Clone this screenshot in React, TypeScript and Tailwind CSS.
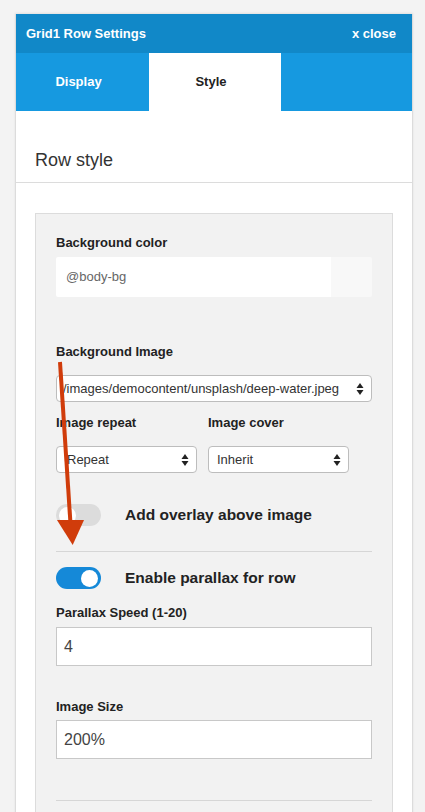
import React from "react";

const font = { fontFamily: '"Liberation Sans", Arial, Helvetica, sans-serif' };

function SelectArrows() {
  return (
    <svg width="8" height="14" viewBox="0 0 8 14" className="shrink-0">
      <path d="M4 1 L7.5 6 L0.5 6 Z" fill="#222" />
      <path d="M4 13 L7.5 8 L0.5 8 Z" fill="#222" />
    </svg>
  );
}

function FakeSelect({ value, className, textClass }: { value: string; className: string; textClass: string }) {
  return (
    <div
      className={`h-[27px] flex items-center justify-between bg-white border border-[#bdbdbd] rounded-[4px] pr-[7px] overflow-hidden ${className}`}
    >
      <span className={`text-[13px] text-[#333] whitespace-nowrap ${textClass}`}>{value}</span>
      <SelectArrows />
    </div>
  );
}

function Toggle({ on }: { on: boolean }) {
  return (
    <div
      className={`w-[45px] h-[22px] rounded-full flex items-center px-[3px] shrink-0 ${
        on ? "bg-[#1589d8] justify-end" : "bg-[#dcdcdc] justify-start"
      }`}
    >
      <div className="w-[17px] h-[17px] rounded-full bg-white" />
    </div>
  );
}

export default function App() {
  return (
    <div className="relative min-h-[900px] bg-[#f3f3f3] pt-[14px]" style={font}>
      <div className="ml-[15px] w-[398px] bg-white border-x border-[#dcdcdc] shadow-[0_-1px_2px_rgba(0,0,0,0.08)]">
        {/* Header */}
        <div className="h-[39px] bg-[#1188c8] flex items-center justify-between pl-[10px] pr-[16px]">
          <span className="text-white font-bold text-[13px]">Grid1 Row Settings</span>
          <span className="text-white font-bold text-[13px]">x close</span>
        </div>
        {/* Tabs */}
        <div className="h-[58px] flex bg-[#1699e0]">
          <div className="w-[133px] flex items-center justify-center pr-[8px] text-white font-bold text-[13px]">
            Display
          </div>
          <div className="w-[132px] bg-white flex items-center justify-center pr-[8px] text-[#222] font-bold text-[13px]">
            Style
          </div>
          <div className="flex-1" />
        </div>
        {/* Heading */}
        <div className="pt-[38px] pb-[11px] pl-[19px] border-b border-[#dcdcdc]">
          <div className="text-[18px] leading-[22px] text-[#333]">Row style</div>
        </div>
        {/* Body */}
        <div className="pt-[30px] px-[19px] pb-[40px]">
          <div className="bg-[#f2f2f2] border border-[#dcdcdc] px-[20px] pt-[21px] pb-[60px]">
            <div className="text-[13px] leading-[16px] font-bold text-[#222]">Background color</div>
            <div className="mt-[6px] h-[40px] flex rounded-[2px] overflow-hidden">
              <div className="flex-1 bg-white flex items-center pl-[10px] text-[13px] text-[#666]">@body-bg</div>
              <div className="w-[41px] bg-[#f8f8f8]" />
            </div>

            <div className="mt-[47px] text-[13px] leading-[16px] font-bold text-[#222]">Background Image</div>
            <FakeSelect
              value="/images/democontent/unsplash/deep-water.jpeg"
              className="mt-[15px] w-full"
              textClass="pl-[6px]"
            />

            <div className="mt-[13px] flex gap-[11px]">
              <div className="w-[141px]">
                <div className="text-[13px] leading-[16px] font-bold text-[#222]">Image repeat</div>
                <FakeSelect value="Repeat" className="mt-[15px] w-full" textClass="pl-[10px]" />
              </div>
              <div className="w-[141px]">
                <div className="text-[13px] leading-[16px] font-bold text-[#222]">Image cover</div>
                <FakeSelect value="Inherit" className="mt-[15px] w-full" textClass="pl-[8px]" />
              </div>
            </div>

            <div className="mt-[31px] h-[22px] flex items-center">
              <Toggle on={false} />
              <span className="ml-[24px] text-[15.5px] leading-[20px] font-bold text-[#222]">
                Add overlay above image
              </span>
            </div>

            <div className="mt-[25px] border-t border-[#d6d6d6]" />

            <div className="mt-[15px] h-[22px] flex items-center">
              <Toggle on={true} />
              <span className="ml-[24px] text-[15.5px] leading-[20px] font-bold text-[#222]">
                Enable parallax for row
              </span>
            </div>

            <div className="mt-[16px] text-[13px] leading-[16px] font-bold text-[#222]">Parallax Speed (1-20)</div>
            <div className="mt-[6px] h-[39px] bg-white border border-[#c8c8c8] flex items-center pl-[7px] text-[16px] text-[#444]">
              4
            </div>

            <div className="mt-[33px] text-[13px] leading-[16px] font-bold text-[#222]">Image Size</div>
            <div className="mt-[5px] h-[39px] bg-white border border-[#c8c8c8] flex items-center pl-[7px] text-[16px] text-[#444]">
              200%
            </div>

            <div className="mt-[41px] border-t border-[#d6d6d6]" />
          </div>
        </div>
      </div>

      {/* Annotation arrow */}
      <svg className="absolute left-0 top-0 pointer-events-none" width="425" height="812" viewBox="0 0 425 812">
        <line x1="60" y1="362" x2="70.5" y2="524" stroke="#d03c0b" strokeWidth="4" />
        <path d="M57 520 L84 520 L72.7 545 Z" fill="#d03c0b" />
      </svg>
    </div>
  );
}
